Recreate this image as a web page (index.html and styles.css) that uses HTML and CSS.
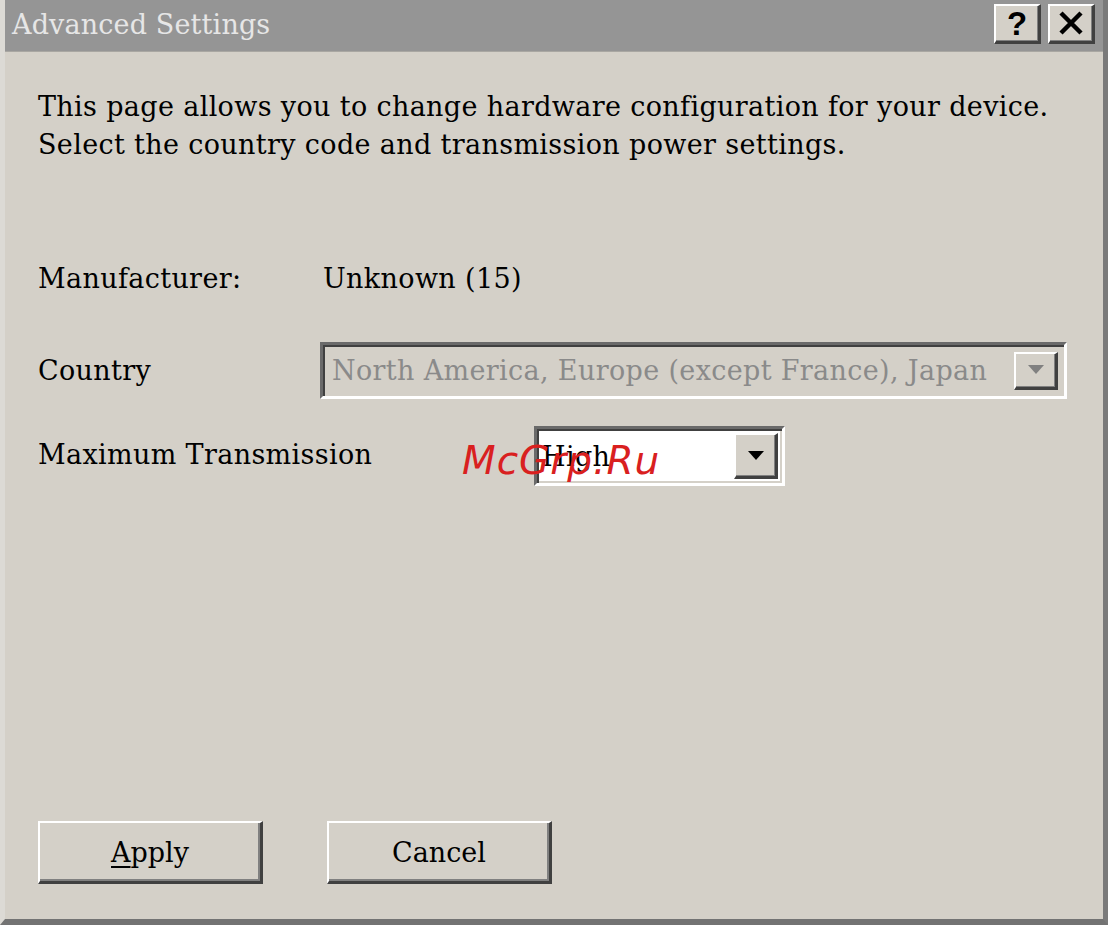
FILE: index.html
```html
<!DOCTYPE html>
<html>
<head>
<meta charset="utf-8">
<link rel="stylesheet" href="styles.css">
</head>
<body>
<div class="window">
  <div class="titlebar">
    <span class="title">Advanced Settings</span>
    <div class="tbtns">
      <div class="tbtn">?</div>
      <div class="tbtn">
        <svg width="26" height="24" viewBox="0 0 26 24"><path d="M3 2 L23 22 M23 2 L3 22" stroke="#000" stroke-width="4.5" fill="none"/></svg>
      </div>
    </div>
  </div>
  <div class="content">
    <p class="intro">This page allows you to change hardware configuration for your device.<br>Select the country code and transmission power settings.</p>
    <div class="row row-manu">
      <span class="label lbl-manu">Manufacturer:</span>
      <span class="value">Unknown (15)</span>
    </div>
    <div class="row row-country">
      <span class="label lbl-country">Country</span>
      <div class="select select-disabled">
        <span class="seltext">North America, Europe (except France), Japan</span>
        <div class="arrowbtn"><svg width="20" height="12" viewBox="0 0 20 12"><path d="M2 1 L18 1 L10 10 Z" fill="#808080"/></svg></div>
      </div>
    </div>
    <div class="row row-tx">
      <span class="label lbl-tx">Maximum Transmission</span>
      <div class="select select-tx">
        <span class="seltext">High</span>
        <div class="arrowbtn"><svg width="20" height="12" viewBox="0 0 20 12"><path d="M2 1 L18 1 L10 10 Z" fill="#000"/></svg></div>
      </div>
    </div>
    <div class="spacer"></div>
    <div class="buttons">
      <div class="btn"><span class="ul">A</span>pply</div>
      <div class="btn">Cancel</div>
    </div>
  </div>
  <div class="watermark">McGrp.Ru</div>
</div>
</body>
</html>
```
FILE: styles.css
```css
html, body {
  margin: 0;
  padding: 0;
  background: #d4d0c8;
}
.window {
  position: relative;
  width: 1108px;
  height: 925px;
  box-sizing: border-box;
  background: #d4d0c8;
  border-left: 5px solid #dcdad5;
  border-right: 5px solid #7a7a7a;
  border-bottom: 6px solid #737373;
  display: flex;
  flex-direction: column;
  font-family: "DejaVu Serif", "Liberation Serif", serif;
  color: #000;
  overflow: hidden;
}
.titlebar {
  height: 52px;
  background: #959595;
  display: flex;
  align-items: center;
  justify-content: space-between;
  border-bottom: 1px solid #a9a7a2;
  box-sizing: border-box;
  padding-left: 7px;
  padding-right: 8px;
}
.title {
  color: #e6e6e6;
  font-size: 27px;
  letter-spacing: 0.15px;
  margin-top: -2px;
}
.tbtns {
  display: flex;
  gap: 7px;
  margin-top: -4px;
}
.tbtn {
  width: 47px;
  height: 40px;
  box-sizing: border-box;
  background: #d4d0c8;
  border-top: 2px solid #ffffff;
  border-left: 2px solid #ffffff;
  border-right: 3px solid #404040;
  border-bottom: 3px solid #404040;
  box-shadow: inset -1px -1px 0 #808080;
  display: flex;
  align-items: center;
  justify-content: center;
  font-family: "Liberation Sans", Arial, sans-serif;
  font-weight: bold;
  font-size: 33px;
  line-height: 1;
}
.content {
  flex: 1;
  display: flex;
  flex-direction: column;
  padding: 0 0 0 33px;
  letter-spacing: 0.35px;
}
.intro {
  margin: 36px 0 0 0;
  font-size: 27px;
  line-height: 38px;
}
.row {
  display: flex;
  align-items: center;
  font-size: 27px;
}
.row-manu {
  margin-top: 94px;
  height: 40px;
}
.lbl-manu {
  width: 285px;
}
.row-country {
  margin-top: 44px;
}
.lbl-country {
  width: 282px;
}
.row-tx {
  margin-top: 27px;
}
.lbl-tx {
  width: 496px;
  position: relative;
  top: -2px;
}
.select {
  display: flex;
  align-items: center;
  justify-content: space-between;
  box-sizing: border-box;
  border-top: 3px solid #6a6a6a;
  border-left: 3px solid #6a6a6a;
  border-right: 3px solid #ffffff;
  border-bottom: 3px solid #ffffff;
  box-shadow: inset 2px 2px 0 #404040, inset -2px -2px 0 #d4d0c8;
}
.select-disabled {
  width: 747px;
  height: 57px;
  background: #d4d0c8;
  color: #8a8a8a;
  padding: 0 6px 0 9px;
}
.select-tx {
  width: 251px;
  height: 60px;
  background: #ffffff;
  padding: 0 4px 0 5px;
}
.arrowbtn {
  width: 44px;
  height: 38px;
  box-sizing: border-box;
  background: #d4d0c8;
  border-top: 2px solid #ffffff;
  border-left: 2px solid #ffffff;
  border-right: 3px solid #404040;
  border-bottom: 3px solid #404040;
  box-shadow: inset -1px -1px 0 #808080;
  display: flex;
  align-items: center;
  justify-content: center;
}
.select-tx .arrowbtn {
  height: 46px;
}
.spacer {
  flex: 1;
}
.buttons {
  display: flex;
  gap: 64px;
  margin-bottom: 35px;
}
.btn {
  width: 225px;
  height: 63px;
  box-sizing: border-box;
  background: #d4d0c8;
  border-top: 2px solid #ffffff;
  border-left: 2px solid #ffffff;
  border-right: 3px solid #404040;
  border-bottom: 3px solid #404040;
  box-shadow: inset -2px -2px 0 #808080;
  display: flex;
  align-items: center;
  justify-content: center;
  font-size: 27px;
  letter-spacing: 0;
}
.ul {
  text-decoration: underline;
  text-underline-offset: 4px;
}
.watermark {
  position: absolute;
  left: 457px;
  top: 438px;
  color: #d9201f;
  font-family: "DejaVu Sans", sans-serif;
  font-style: italic;
  font-size: 39px;
  letter-spacing: 1px;
}
```
